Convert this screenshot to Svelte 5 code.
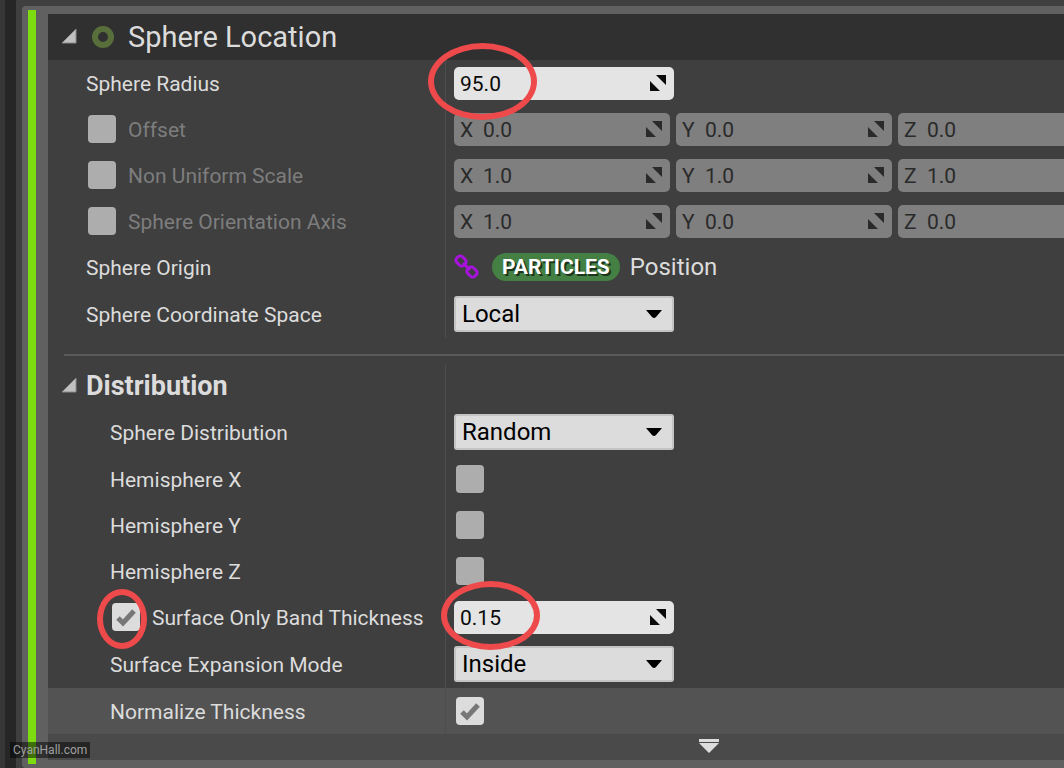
<script lang="ts">
  // Types
  type Row = {
    id: string;
    label: string;
    kind: 'number' | 'vector' | 'link' | 'select' | 'check';
    value?: string;
    vector?: string[];
    options?: string[];
    checked?: boolean;
    override?: boolean;
    mark?: string;
  };

  // Variables
  const axes = ['X', 'Y', 'Z'];

  let location: Row[] = $state([
    {id: 'radius', label: 'Sphere Radius', kind: 'number', value: '95.0', mark: 'mark-radius'},
    {id: 'offset', label: 'Offset', kind: 'vector', vector: ['0.0', '0.0', '0.0'], override: false},
    {id: 'scale', label: 'Non Uniform Scale', kind: 'vector', vector: ['1.0', '1.0', '1.0'], override: false},
    {id: 'axis', label: 'Sphere Orientation Axis', kind: 'vector', vector: ['1.0', '0.0', '0.0'], override: false},
    {id: 'origin', label: 'Sphere Origin', kind: 'link'},
    {id: 'space', label: 'Sphere Coordinate Space', kind: 'select', value: 'Local', options: ['Local', 'World', 'Simulation']},
  ]);

  let distribution: Row[] = $state([
    {id: 'dist', label: 'Sphere Distribution', kind: 'select', value: 'Random', options: ['Random', 'Uniform', 'Direct']},
    {id: 'hemi-x', label: 'Hemisphere X', kind: 'check', checked: false},
    {id: 'hemi-y', label: 'Hemisphere Y', kind: 'check', checked: false},
    {id: 'hemi-z', label: 'Hemisphere Z', kind: 'check', checked: false},
    {id: 'band', label: 'Surface Only Band Thickness', kind: 'number', value: '0.15', override: true, mark: 'mark-band'},
    {id: 'mode', label: 'Surface Expansion Mode', kind: 'select', value: 'Inside', options: ['Inside', 'Centered', 'Outside']},
    {id: 'normalize', label: 'Normalize Thickness', kind: 'check', checked: true},
  ]);

  let moduleOpen = $state(true);
  let distributionOpen = $state(true);
</script>

{#snippet arrow()}
  <svg class="arrow" viewBox="0 0 18 18" aria-hidden="true">
    <path d="M16 1V15H2Z" fill="#c0c0c0" stroke="#8a8a8a" stroke-width="1" />
  </svg>
{/snippet}

{#snippet tick()}
  <svg class="tick" viewBox="0 0 28 28" aria-hidden="true">
    <path d="M6 15L11 20L22 8" fill="none" stroke="#777" stroke-width="5" />
  </svg>
{/snippet}

{#snippet spinner()}
  <svg class="spinner" viewBox="0 0 18 18" aria-hidden="true">
    <path d="M7 1H17V11Z M1 7V17H11Z" fill="currentColor" />
  </svg>
{/snippet}

{#snippet property(row: Row)}
  <div class="row {row.kind}" class:disabled={row.override === false}>
    <div class="name">
      {#if row.override !== undefined}
        <span class="box">
          <input type="checkbox" aria-label="Override {row.label}" bind:checked={row.override} />
          {#if row.override}
            {@render tick()}
            <span class="mark mark-override"></span>
          {/if}
        </span>
      {/if}
      <label for={row.kind === 'link' ? undefined : row.id}>{row.label}</label>
    </div>
    <div class="value">
      {#if row.kind === 'number'}
        <div class="field">
          <input id={row.id} type="text" bind:value={row.value} />
          {@render spinner()}
          <span class="mark {row.mark}"></span>
        </div>
      {:else if row.kind === 'vector' && row.vector}
        {#each axes as axis, i}
          <div class="field">
            <label for={i ? `${row.id}-${axis}` : row.id}>{axis}</label>
            <input id={i ? `${row.id}-${axis}` : row.id} type="text" disabled={!row.override} bind:value={row.vector[i]} />
            {@render spinner()}
          </div>
        {/each}
      {:else if row.kind === 'link'}
        <svg class="chain" viewBox="0 0 26 26" aria-hidden="true">
          <g fill="none" stroke="#a713dc" stroke-width="3">
            <rect x="-5" y="-4" width="10" height="8" rx="3" transform="translate(7 7) rotate(45)" />
            <rect x="-5" y="-4" width="10" height="8" rx="3" transform="translate(18 18) rotate(45)" />
            <path d="M9 9L16 16" />
          </g>
        </svg>
        <span class="pill">PARTICLES</span>
        <span class="target">Position</span>
      {:else if row.kind === 'select'}
        <div class="combo">
          <select id={row.id} bind:value={row.value}>
            {#each row.options ?? [] as option}
              <option>{option}</option>
            {/each}
          </select>
          <svg class="caret" viewBox="0 0 18 10" aria-hidden="true">
            <path d="M1 1H17L11 8Q9 10 7 8Z" fill="#000" />
          </svg>
        </div>
      {:else}
        <span class="box">
          <input id={row.id} type="checkbox" bind:checked={row.checked} />
          {#if row.checked}{@render tick()}{/if}
        </span>
      {/if}
    </div>
  </div>
{/snippet}

<main>
  <div class="gutter"></div>
  <section class="module">
    <div class="status"></div>
    <div class="panel">
      <header>
        <button type="button" aria-label="Toggle module" onclick={() => (moduleOpen = !moduleOpen)}>
          {@render arrow()}
        </button>
        <span class="ring"></span>
        <h1>Sphere Location</h1>
      </header>

      {#if moduleOpen}
        {#each location as row (row.id)}
          {@render property(row)}
        {/each}

        <hr />

        <div class="row group">
          <div class="name">
            <button type="button" aria-label="Toggle distribution" onclick={() => (distributionOpen = !distributionOpen)}>
              {@render arrow()}
            </button>
            <h2>Distribution</h2>
          </div>
          <div class="value"></div>
        </div>

        {#if distributionOpen}
          <div class="nested">
            {#each distribution as row (row.id)}
              {@render property(row)}
            {/each}
          </div>
        {/if}
      {/if}

      <footer>
        <button type="button" aria-label="Show advanced">
          <svg class="more" viewBox="0 0 20 16" aria-hidden="true">
            <path d="M0 0H20V3H0Z M0 4H20L10 14Z" fill="#ddd" />
          </svg>
        </button>
      </footer>
    </div>
  </section>
  <a class="watermark" href="#top">CyanHall.com</a>
</main>

<style>
  :global(body) {
    background: #3f3f3f;
  }

  main {
    position: relative;
    display: flex;
    min-height: 100vh;
    overflow: hidden;
    background: #3f3f3f;
    color: #dcdcdc;
    font: 21px/24px Roboto, sans-serif;
  }

  .gutter {
    flex: none;
    box-sizing: border-box;
    width: 16px;
    border-left: 5px solid #363636;
    background: #262626;
  }

  .module {
    display: flex;
    flex: 1;
    gap: 12px;
    min-width: 0;
    margin: 6px 0 0 6px;
    padding: 4px 0 4px 6px;
    border-radius: 4px 0 0 4px;
    background: #606060;
  }

  .status {
    flex: none;
    width: 8px;
    background: #7ddc10;
  }

  .panel {
    flex: 1;
    min-width: 0;
    margin: 4px 0;
    background: #3f3f3f;
  }

  header {
    display: flex;
    align-items: center;
    height: 46px;
    padding-left: 12px;
    background: #303030;
  }

  h1,
  h2 {
    margin: 0;
    font-size: 29px;
    line-height: 36px;
    font-weight: 400;
  }

  h2 {
    font-size: 27px;
    font-weight: 700;
  }

  button {
    display: block;
    padding: 0;
    border: 0;
    background: none;
    cursor: pointer;
  }

  svg {
    display: block;
    flex: none;
  }

  .arrow {
    width: 18px;
    height: 18px;
  }

  .ring {
    box-sizing: border-box;
    width: 22px;
    height: 22px;
    margin: 0 14px;
    border: 6px solid #586f3b;
    border-radius: 50%;
  }

  .row {
    display: grid;
    grid-template-columns: 397px minmax(0, 1fr);
    height: 46px;
  }

  .row.select {
    height: 48px;
  }

  .row.group {
    height: 44px;
  }

  .name {
    display: flex;
    align-items: center;
    padding-left: 38px;
    white-space: nowrap;
  }

  .name label {
    padding-top: 2px;
  }

  .group .name {
    gap: 8px;
    padding-left: 12px;
  }

  .nested .name {
    padding-left: 62px;
  }

  .name .box {
    margin-right: 12px;
  }

  .disabled .name {
    color: #7d7d7d;
  }

  .value {
    display: flex;
    align-items: center;
    gap: 6px;
    padding-left: 8px;
    border-left: 1px solid #4d4d4d;
  }

  .nested .row:last-child {
    background: #535353;
  }

  hr {
    height: 2px;
    margin: 16px 0 8px 16px;
    border: 0;
    background: #5a5a5a;
  }

  .field {
    position: relative;
    display: flex;
    flex: none;
    align-items: center;
    box-sizing: border-box;
    width: 220px;
    height: 33px;
    padding: 0 7px 0 6px;
    border-radius: 5px;
    background: #e4e4e4;
    color: #0a0a0a;
  }

  .vector .field {
    width: 216px;
    background: #7f7f7f;
    color: #2a2a2a;
  }

  .field label {
    width: 23px;
    padding-top: 2px;
  }

  .field input {
    flex: 1;
    min-width: 0;
    padding: 2px 0 0;
    border: 0;
    background: none;
    color: inherit;
    font: inherit;
  }

  .spinner {
    width: 18px;
    height: 18px;
  }

  .combo {
    position: relative;
    width: 220px;
  }

  .combo select {
    display: block;
    box-sizing: border-box;
    width: 100%;
    height: 36px;
    padding: 0 40px 0 6px;
    border: 2px solid #c4c4c4;
    border-radius: 3px;
    appearance: none;
    background: #dcdcdc;
    color: #000;
    font: 24px/28px Roboto, sans-serif;
  }

  .caret {
    position: absolute;
    top: 13px;
    right: 11px;
    width: 18px;
    height: 10px;
    pointer-events: none;
  }

  .box {
    position: relative;
    flex: none;
    width: 28px;
    height: 28px;
    margin-left: 2px;
  }

  .box input {
    display: block;
    width: 28px;
    height: 28px;
    margin: 0;
    border-radius: 4px;
    appearance: none;
    background: #adadad;
  }

  .box input:checked {
    background: #dcdcdc;
  }

  .tick {
    position: absolute;
    inset: 0;
    pointer-events: none;
  }

  .chain {
    width: 26px;
    height: 26px;
  }

  .pill {
    margin: 0 4px 0 6px;
    padding: 0 10px;
    border-radius: 14px;
    background: #448043;
    color: #fff;
    font-weight: 700;
    line-height: 28px;
    text-shadow: 2px 2px 0 #1c351c;
  }

  .target {
    font-size: 24px;
  }

  .mark {
    position: absolute;
    z-index: 1;
    box-sizing: border-box;
    border: 6px solid #ee4a4c;
    border-radius: 50%;
    pointer-events: none;
  }

  .mark-radius {
    top: -24px;
    left: -26px;
    width: 109px;
    height: 77px;
  }

  .mark-band {
    top: -20px;
    left: -13px;
    width: 99px;
    height: 69px;
  }

  .mark-override {
    top: -14px;
    left: -15px;
    width: 50px;
    height: 60px;
  }

  footer {
    display: flex;
    align-items: center;
    justify-content: center;
    height: 26px;
    padding-left: 306px;
    background: #4a4a4a;
  }

  .more {
    width: 20px;
    height: 16px;
  }

  .watermark {
    position: absolute;
    bottom: 10px;
    left: 10px;
    padding: 0 3px;
    background: rgba(0, 0, 0, 0.5);
    color: #a0a0a0;
    font-size: 12px;
    line-height: 16px;
    text-decoration: none;
  }
</style>
